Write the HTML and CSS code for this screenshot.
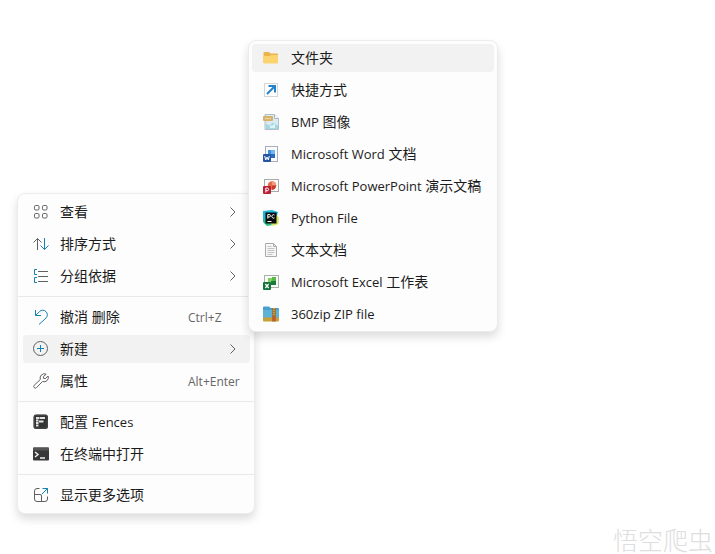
FILE: index.html
```html
<!DOCTYPE html>
<html lang="zh-CN">
<head>
  <meta charset="UTF-8" />
  <meta name="viewport" content="width=device-width, initial-scale=1.0"/>
  <title>桌面</title>
  <link rel="stylesheet" href="styles.css">
</head>
<body>
<main class="desktop">

  <!-- desktop context menu -->
  <div class="menu context-menu" role="menu">
    <button class="menu-item" role="menuitem">
      <svg class="icon line" viewBox="0 0 16 16"><rect x="1.500" y="1.500" width="4.500" height="4.500" rx="1.200"/><rect x="9.500" y="1.500" width="4.500" height="4.500" rx="1.200"/><rect x="1.500" y="9.500" width="4.500" height="4.500" rx="1.200"/><rect x="9.500" y="9.500" width="4.500" height="4.500" rx="1.200"/></svg>
      <span class="label">查看</span>
      <svg class="arrow" viewBox="0 0 8 12"><path d="M1.500 1.500 6 6l-4.500 4.500"/></svg>
    </button>
    <button class="menu-item" role="menuitem">
      <svg class="icon line" viewBox="0 0 16 16"><path d="M4.500 14V2.500M.5 6.500l4-4 4 4"/><path class="blue" d="M11.500 2v11.500M7.500 9.500l4 4 4-4"/></svg>
      <span class="label">排序方式</span>
      <svg class="arrow" viewBox="0 0 8 12"><path d="M1.500 1.500 6 6l-4.500 4.500"/></svg>
    </button>
    <button class="menu-item" role="menuitem">
      <svg class="icon line" viewBox="0 0 16 16"><path d="M5 3.500h10M5 8.500h10M5 13.500h10"/><path class="blue" d="M4 1.500H1.500v5H4M4 9.500H1.500v5H4"/></svg>
      <span class="label">分组依据</span>
      <svg class="arrow" viewBox="0 0 8 12"><path d="M1.500 1.500 6 6l-4.500 4.500"/></svg>
    </button>
    <hr class="divider">
    <button class="menu-item" role="menuitem">
      <svg class="icon line" viewBox="0 0 16 16"><path class="blue" d="M2.500 1v5.500H8M2.500 6.500 6.500 2.600a4.500 4.500 0 0 1 6.500 0 4.500 4.500 0 0 1 0 6.400L6 15.500"/></svg>
      <span class="label">撤消 删除</span>
      <span class="shortcut">Ctrl+Z</span>
    </button>
    <button class="menu-item active" role="menuitem" aria-haspopup="true" aria-expanded="true">
      <svg class="icon line" viewBox="0 0 16 16"><circle cx="7.500" cy="7.500" r="7"/><path class="blue" d="M7.500 4v7M4 7.500h7"/></svg>
      <span class="label">新建</span>
      <svg class="arrow" viewBox="0 0 8 12"><path d="M1.500 1.500 6 6l-4.500 4.500"/></svg>
    </button>
    <button class="menu-item" role="menuitem">
      <svg class="icon line" viewBox="0 0 16 16"><path d="M13.200 1.200a4.300 4.300 0 0 0-5.900 5.300L1.200 12.300a1.600 1.600 0 0 0 2.300 2.300l6-6.100a4.300 4.300 0 0 0 5.600-5.500L12.500 5.600l-2-.3-.1-1.700z"/></svg>
      <span class="label">属性</span>
      <span class="shortcut">Alt+Enter</span>
    </button>
    <hr class="divider">
    <button class="menu-item" role="menuitem">
      <svg class="icon" viewBox="0 0 16 16"><rect x=".5" y=".5" width="14.500" height="14.500" rx="2.500" fill="#333"/><rect x="1.200" y="1.200" width="13" height="13" rx="2" fill="none" stroke="#555" stroke-width=".7"/><path d="M3 3h3v2H3zM6.500 3H12v2H6.500zM3 5.500h2.500v2H3zM6 6.500h4.500v2H6zM3 8h2.500v2H3zM3 10.500h2.500v2H3z" fill="#e4e4e4"/></svg>
      <span class="label">配置 <span class="latin">Fences</span></span>
    </button>
    <button class="menu-item" role="menuitem">
      <svg class="icon" viewBox="0 0 16 16"><rect y="1.500" width="16" height="13" rx="1" fill="#383838"/><path d="M0 4.500v-2a1 1 0 0 1 1-1h14a1 1 0 0 1 1 1v2z" fill="#555"/><path d="m2 6 3 2.500L2 11M7 12h5" fill="none" stroke="#eee" stroke-width="1.500"/></svg>
      <span class="label">在终端中打开</span>
    </button>
    <hr class="divider">
    <button class="menu-item" role="menuitem">
      <svg class="icon line" viewBox="0 0 16 16"><path d="M6.500 1.500H4A2.500 2.500 0 0 0 1.500 4v8A2.500 2.500 0 0 0 4 14.500h8a2.500 2.500 0 0 0 2.500-2.500V9.500M1.500 7.500H6A2 2 0 0 1 8.500 10v4.500"/><path class="blue" d="M9.500 1.500h5v5M14.500 1.500 8.500 7.500"/></svg>
      <span class="label">显示更多选项</span>
    </button>
  </div>

  <!-- "new" submenu -->
  <div class="menu submenu" role="menu" aria-label="新建">
    <button class="menu-item active" role="menuitem">
      <svg class="icon" viewBox="0 0 16 16"><path d="M.5 3a1 1 0 0 1 1-1H6l1.500 1.500h6.500a1 1 0 0 1 1 1V13H.5z" fill="#e9b44a"/><path d="M.5 6H7l1.200-1H15v7.500a1 1 0 0 1-1 1H1.500a1 1 0 0 1-1-1z" fill="#fbd46f"/></svg>
      <span class="label">文件夹</span>
    </button>
    <button class="menu-item" role="menuitem">
      <svg class="icon" viewBox="0 0 16 16"><rect x="1.500" y="1.500" width="13" height="13" fill="#fdfdfd" stroke="#d5d5d5"/><path d="m4 12 7-7M5.500 4H12v6.500" fill="none" stroke="#2481cb" stroke-width="2"/></svg>
      <span class="label">快捷方式</span>
    </button>
    <button class="menu-item" role="menuitem">
      <svg class="icon" viewBox="0 0 16 16"><path d="M2 .5h9.500l4 4v11H2z" fill="#dbebf2" stroke="#b0bec6"/><path d="M11.500.5v4h4" fill="#f5fafc" stroke="#a9bac4"/><rect y="2" width="10" height="5" rx="1" fill="#d4b06c"/><path d="M2 4.500h6" stroke="#efdcae" stroke-width="1.500" stroke-dasharray="1.500 .7"/><path d="M3 15V9.500l3.500 2 3.500-3 5 3V15z" fill="#a5d6e4"/><path d="M7 14v-3l2 1 3-3v5z" fill="#dff2f5"/></svg>
      <span class="label"><span class="latin">BMP</span> 图像</span>
    </button>
    <button class="menu-item" role="menuitem">
      <svg class="icon" viewBox="0 0 16 16"><rect x="2.500" y=".5" width="12" height="15" fill="#f8fafc" stroke="#a8afb8"/><path d="M5 4h7v8H5z" fill="#3c8ddd"/><path d="M8 4h4v4H8z" fill="#73b7f0"/><path d="M8 8h4v4H8z" fill="#286bc0"/><rect y="8" width="8" height="8" rx="1" fill="#2355a3"/><path d="m1.700 10 1 4L4 11l1.300 3 1-4" fill="none" stroke="#fff"/></svg>
      <span class="label"><span class="latin">Microsoft Word</span> 文档</span>
    </button>
    <button class="menu-item" role="menuitem">
      <svg class="icon" viewBox="0 0 16 16"><rect x="1.500" y="1.500" width="14" height="12" fill="#fcfafa" stroke="#aaa"/><circle cx="9" cy="7.500" r="4.200" fill="#e56a4d"/><path d="M9 3.300a4.200 4.200 0 0 1 4.200 4.200H9z" fill="#f39a7f"/><path d="M9 7.500h4.200A4.200 4.200 0 0 1 9 11.700z" fill="#c83c2d"/><rect y="8" width="8" height="8" rx="1" fill="#ba2034"/><path d="M2.800 14.500v-4.500h1.400a1.400 1.400 0 0 1 0 2.800H2.800" fill="none" stroke="#fff"/></svg>
      <span class="label"><span class="latin">Microsoft PowerPoint</span> 演示文稿</span>
    </button>
    <button class="menu-item" role="menuitem">
      <svg class="icon" viewBox="0 0 16 16"><path d="M0 1 9 0l6 2-3 11-8 2-4-3z" fill="#21b6d7"/><path d="M0 9h8l2 6-6 1-3-3z" fill="#28bd86"/><path d="m14 5 2 3-.500 6-5.500 2-3-3z" fill="#dbe660"/><rect x="2.500" y="2.500" width="11" height="11" fill="#080c0c"/><path d="M4.800 8.500v-4h1.400a1.200 1.200 0 0 1 0 2.500H4.800M11.500 5a1.700 1.700 0 1 0 0 2.800M4.500 11.500h4" fill="none" stroke="#fff"/></svg>
      <span class="label"><span class="latin">Python File</span></span>
    </button>
    <button class="menu-item" role="menuitem">
      <svg class="icon" viewBox="0 0 16 16"><path d="M2.500 1.500h8l3 3v10h-11z" fill="#f7f7f7" stroke="#aaa"/><path d="M10.500 1.500v3h3" fill="none" stroke="#aaa"/><path d="M4.500 4.500h4M4.500 6.500h7M4.500 8.500h7M4.500 10.500h7M4.500 12.500h5" stroke="#b5b5b5" stroke-width=".8"/></svg>
      <span class="label">文本文档</span>
    </button>
    <button class="menu-item" role="menuitem">
      <svg class="icon" viewBox="0 0 16 16"><rect x="1.500" y="1.500" width="14" height="12" fill="#fafcfa" stroke="#aab0aa"/><path d="M5 4h4v4H5z" fill="#81cf61"/><path d="M9 3h4v4H9z" fill="#56b845"/><path d="M8 7h5v4H8z" fill="#187b3b"/><rect y="8" width="8" height="8" rx="1" fill="#14723c"/><path d="m2.300 10 3.400 4M5.700 10l-3.400 4" stroke="#fff" stroke-width="1.200"/></svg>
      <span class="label"><span class="latin">Microsoft Excel</span> 工作表</span>
    </button>
    <button class="menu-item" role="menuitem">
      <svg class="icon" viewBox="0 0 16 16"><path d="M0 1.500a1 1 0 0 1 1-1h5L7.500 2H15a1 1 0 0 1 1 1v9H0z" fill="#4a9fce"/><path d="M0 4h16v8H0z" fill="#5eb3d5"/><path d="M0 11.500h16v3a1 1 0 0 1-1 1H1a1 1 0 0 1-1-1z" fill="#c6a13a"/><path d="M9 2h4v13.500H9z" fill="#9c7638"/><path d="M11 2v8" stroke="#e0c88c" stroke-dasharray="1 1"/><rect x="9.500" y="10.500" width="3" height="4" fill="#c75a28"/></svg>
      <span class="label"><span class="latin">360zip ZIP file</span></span>
    </button>
  </div>

  <span class="watermark">悟空爬虫</span>
</main>
</body>
</html>
```
FILE: styles.css
```css
:root {
  --text: #1b1b1b;
  --muted: #666;
  --line: #606060;
  --blue: #1681b5;
  --hover: #f2f2f2;
}

* {
  box-sizing: border-box;
}

body {
  margin: 0;
  background: white;
  color: var(--text);
  font-family: "Open Sans", "Noto Sans CJK SC", sans-serif;
  font-size: 14px;
}

.desktop {
  position: relative;
  min-height: 100vh;
}

.menu {
  position: absolute;
  display: flex;
  flex-direction: column;
  gap: 4px;
  background: #fdfdfd;
  border: 1px solid #ececec;
  border-radius: 8px;
  box-shadow: 0 5px 10px rgba(0, 0, 0, 0.14);
}

.context-menu {
  left: 17px;
  top: 193px;
  width: 238px;
  padding: 4px 0;
}

.submenu {
  left: 248px;
  top: 40px;
  width: 250px;
  padding: 3px 0;
}

.menu-item {
  display: flex;
  align-items: center;
  gap: 11px;
  height: 28px;
  margin: 0 4px 0 5px;
  padding: 0 10px;
  border: none;
  border-radius: 4px;
  background: none;
  color: inherit;
  font: inherit;
  text-align: left;
  white-space: nowrap;
}

.submenu .menu-item {
  gap: 12px;
  margin: 0 3px;
  padding: 0 11px;
}

.menu-item:hover,
.menu-item.active {
  background: var(--hover);
}

.label {
  flex: 1;
  line-height: 28px;
}

.latin {
  font-size: 13px;
}

.shortcut {
  width: 52px;
  color: var(--muted);
  font-size: 12px;
}

.icon {
  width: 16px;
  height: 16px;
  flex-shrink: 0;
}

.line,
.arrow {
  fill: none;
  stroke: var(--line);
}

.line .blue {
  stroke: var(--blue);
}

.arrow {
  width: 8px;
  height: 12px;
  margin-right: 3px;
}

.divider {
  width: 100%;
  height: 1px;
  margin: 2px 0;
  border: none;
  background: #e9e9e9;
}

.watermark {
  position: absolute;
  right: 2px;
  bottom: 0;
  color: #dedede;
  font-family: "Noto Sans CJK SC", sans-serif;
  font-size: 25px;
  font-weight: 300;
  line-height: 30px;
}
```
